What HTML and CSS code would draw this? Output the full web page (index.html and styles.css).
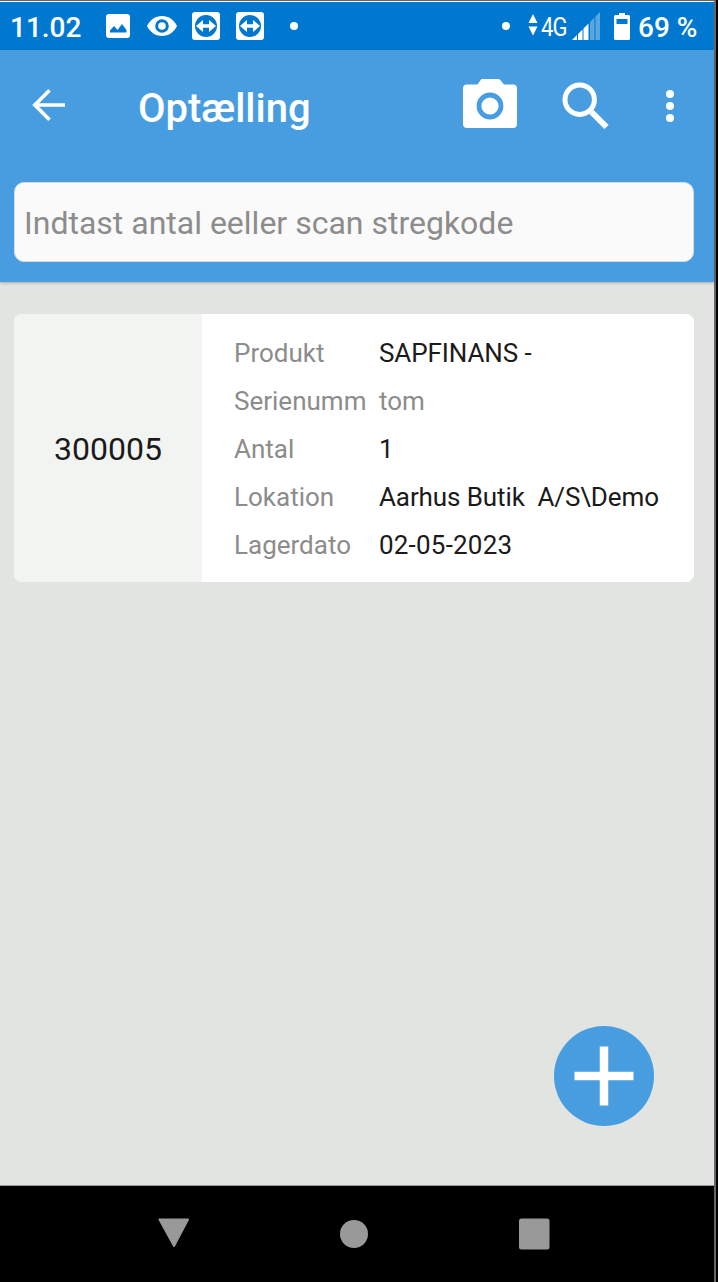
FILE: index.html
```html
<!DOCTYPE html>
<html lang="da">

<head>
    <meta charset="UTF-8">
    <meta name="viewport" content="width=device-width, initial-scale=1.0">
    <title>Optælling</title>
    <link rel="stylesheet" href="styles.css">
</head>

<body>
    <div class="phone">
        <div class="status-bar">
            <span class="clock">11.02</span>
            <div class="notifications">
                <svg width="24" height="24" viewBox="0 0 24 24">
                    <path fill="#fff" d="M3 0h18a3 3 0 0 1 3 3v18a3 3 0 0 1-3 3H3a3 3 0 0 1-3-3V3a3 3 0 0 1 3-3z" />
                    <path fill="#0078d0" d="M4 18.500v-2l4-4.500 3.500 4 4.500-6 4.500 6v2.500z" />
                </svg>
                <svg class="eye" width="30" height="20" viewBox="0 0 30 20">
                    <path fill="#fff" d="M0 10C3 4 8 0 15 0s12 4 15 10c-3 6-8 10-15 10S3 16 0 10z" />
                    <circle cx="15" cy="10" r="5.300" fill="#fff" stroke="#0078d0" stroke-width="3" />
                </svg>
                <svg width="28" height="28" viewBox="0 0 28 28">
                    <rect width="28" height="28" rx="3" fill="#fff" />
                    <circle cx="14" cy="14" r="11" fill="#0078d0" />
                    <path fill="#fff" d="M4 14l7-6v4.200h6V8l7 6-7 6v-4.200h-6V20z" />
                </svg>
                <svg width="28" height="28" viewBox="0 0 28 28">
                    <rect width="28" height="28" rx="3" fill="#fff" />
                    <circle cx="14" cy="14" r="11" fill="#0078d0" />
                    <path fill="#fff" d="M4 14l7-6v4.200h6V8l7 6-7 6v-4.200h-6V20z" />
                </svg>
            </div>
            <span class="dot"></span>
            <div class="system">
                <span class="dot"></span>
                <svg class="data" width="10" height="22" viewBox="0 0 10 22">
                    <path fill="#fff" d="M5 0l4.500 9h-9zM5 21.500l4.500-9h-9z" />
                </svg>
                <span class="network">4G</span>
                <svg class="signal" width="28" height="28" viewBox="0 0 28 28">
                    <path fill="#fff" d="M0 28l5-5v5zM6 28v-6l4.500-4.500V28zM11.500 28V16.500L16.500 11.500V28z" />
                    <path fill="#fff" opacity=".35" d="M18 28V10l4.500-4.500V28zM23.500 28V4.500L28 0v28z" />
                </svg>
                <svg class="battery" width="16" height="27" viewBox="0 0 16 27">
                    <path fill="#fff" fill-rule="evenodd" d="M5 0h6v2h3.500A1.500 1.500 0 0 1 16 3.500v22a1.500 1.500 0 0 1-1.500 1.500h-13A1.500 1.500 0 0 1 0 25.500v-22A1.500 1.500 0 0 1 1.500 2H5zM2.500 6v5h11V6z" />
                </svg>
                <span class="percent">69 %</span>
            </div>
        </div>

        <header>
            <div class="toolbar">
                <svg class="back" width="34" height="32" viewBox="0 0 34 32">
                    <path fill="none" stroke="#fff" stroke-width="3.600" d="M33 16H3M17.500 1.300L2.800 16l14.700 14.700" />
                </svg>
                <h1>Optælling</h1>
                <svg class="camera" width="54" height="49" viewBox="0 0 54 49">
                    <path fill="#fff" d="M19 0h16q1.500 0 2.500 1.300L41 5.500h9a4 4 0 0 1 4 4V45a4 4 0 0 1-4 4H4a4 4 0 0 1-4-4V9.500a4 4 0 0 1 4-4h10.500l3-4.200Q18 0 19 0z" />
                    <circle cx="27" cy="27" r="11" fill="#fff" stroke="#489de1" stroke-width="4.800" />
                </svg>
                <svg class="search" width="48" height="48" viewBox="0 0 48 48">
                    <circle cx="17.700" cy="17.700" r="14.700" fill="none" stroke="#fff" stroke-width="5" />
                    <path stroke="#fff" stroke-width="6" d="M29.500 30L44.500 45" />
                </svg>
                <svg class="more" width="8" height="32" viewBox="0 0 8 32">
                    <g fill="#fff">
                        <circle cx="4" cy="4" r="4" />
                        <circle cx="4" cy="16" r="4" />
                        <circle cx="4" cy="28" r="4" />
                    </g>
                </svg>
            </div>
            <input type="text" class="scan" placeholder="Indtast antal eeller scan stregkode">
        </header>

        <main>
            <div class="card">
                <div class="number">300005</div>
                <dl>
                    <dt>Produkt</dt>
                    <dd class="product">SAPFINANS -</dd>
                    <dt>Serienumm</dt>
                    <dd class="empty">tom</dd>
                    <dt>Antal</dt>
                    <dd>1</dd>
                    <dt>Lokation</dt>
                    <dd class="location">Aarhus Butik  A/S\Demo</dd>
                    <dt>Lagerdato</dt>
                    <dd class="date">02-05-2023</dd>
                </dl>
            </div>
            <button class="add" aria-label="Tilføj">
                <svg width="60" height="60" viewBox="0 0 60 60">
                    <path stroke="#fff" stroke-width="8.500" d="M30 .5v59M.5 30h59" />
                </svg>
            </button>
        </main>

        <nav>
            <svg width="32" height="34" viewBox="0 0 32 34">
                <path fill="#999" stroke="#999" stroke-width="2" stroke-linejoin="round" d="M1.500 2.500h28.500L16 29z" />
            </svg>
            <svg width="30" height="32" viewBox="0 0 30 32">
                <ellipse cx="15" cy="16" rx="14" ry="14" fill="#999" />
            </svg>
            <svg width="32" height="32" viewBox="0 0 32 32">
                <rect x="1" y="0.500" width="30.500" height="31" rx="2.500" fill="#999" />
            </svg>
        </nav>
    </div>
</body>

</html>
```
FILE: styles.css
```css
* {
    box-sizing: border-box;
}

body {
    margin: 0;
    background-color: #000;
    font-family: Roboto, sans-serif;
    color: #1a1a1a;
}

svg {
    display: block;
    flex: none;
}

.phone {
    width: 716px;
    height: 1282px;
    border-top: 1px solid #666;
    border-right: 2px solid #666;
    display: flex;
    flex-direction: column;
}

.status-bar {
    height: 49px;
    background-color: #0078d0;
    border-top: 1px solid #fff;
    padding: 0 17px 0 10px;
    display: flex;
    align-items: center;
    color: #fff;
    font-size: 28px;
    font-weight: 500;
}

.clock {
    width: 96px;
    padding-top: 2px;
}

.notifications {
    display: flex;
    align-items: center;
    gap: 16px;
    margin-right: 26px;
}

.eye {
    margin: 0 -1px 0 1px;
}

.dot {
    width: 8px;
    height: 8px;
    border-radius: 50%;
    background-color: #fff;
}

.system {
    display: flex;
    align-items: center;
    margin-left: auto;
}

.data {
    margin: -3px 3px 0 18px;
}

.network {
    width: 31px;
    font-size: 25px;
    font-weight: 400;
    letter-spacing: -1px;
    padding-top: 2px;
    transform: scaleX(0.88);
    transform-origin: left;
}

.battery {
    margin: 0 8px 0 14px;
}

.percent {
    width: 59px;
    white-space: nowrap;
    padding-top: 2px;
}

header {
    height: 232px;
    background-color: #489de1;
    padding: 0 20px 0 14px;
    box-shadow: 0 1px 3px rgba(0, 0, 0, 0.25);
    position: relative;
    z-index: 1;
}

.toolbar {
    height: 132px;
    padding: 0 20px 22px 18px;
    display: flex;
    align-items: center;
}

h1 {
    margin: 6px auto 0 72px;
    color: #fff;
    font-size: 40px;
    font-weight: 500;
}

.camera {
    margin: 0 45px 3px 0;
}

.search {
    margin: 2px 56px 0 0;
}

.more {
    margin-top: 2px;
}

.scan {
    display: block;
    width: 680px;
    height: 80px;
    padding: 2px 9px 0;
    border: 1px solid #d5dde3;
    border-radius: 10px;
    background-color: #fafafa;
    font-family: inherit;
    font-size: 32px;
}

.scan::placeholder {
    color: #8c8c8c;
}

main {
    flex: 1;
    background-color: #e2e4e1;
    border-bottom: 1px solid #999;
    padding: 32px 20px 0 14px;
    position: relative;
}

.card {
    height: 268px;
    border-radius: 8px;
    background-color: #fff;
    display: flex;
    overflow: hidden;
}

.number {
    width: 188px;
    padding-top: 2px;
    background-color: #f2f4f1;
    display: flex;
    align-items: center;
    justify-content: center;
    font-size: 32px;
}

dl {
    margin: 0;
    padding: 15px 0 0 32px;
    display: grid;
    grid-template-columns: 145px auto;
    grid-auto-rows: 48px;
    line-height: 48px;
    font-size: 26px;
    white-space: pre;
}

dt,
.empty {
    color: #8c8c8c;
}

dd {
    margin: 0;
}

.product,
.location {
    letter-spacing: -0.1px;
}

.date {
    letter-spacing: 0.2px;
}

/* floating button above the list */
.add {
    position: absolute;
    right: 60px;
    bottom: 59px;
    width: 100px;
    height: 100px;
    padding: 0;
    border: none;
    border-radius: 50%;
    background-color: #489de1;
    display: flex;
    align-items: center;
    justify-content: center;
}

nav {
    height: 96px;
    background-color: #000;
    display: flex;
    justify-content: center;
    align-items: center;
    gap: 149px;
    padding-right: 6px;
}
```
